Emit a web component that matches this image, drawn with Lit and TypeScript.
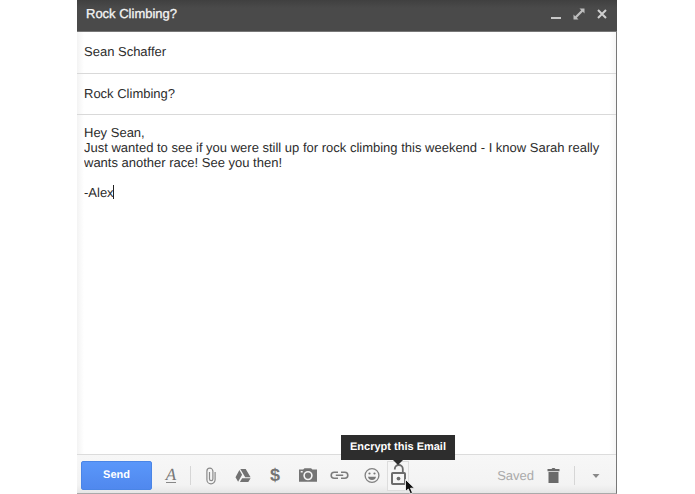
import { LitElement, html, css, svg } from "lit";
import { customElement } from "lit/decorators.js";

const icons = {
  clip: svg`<path d="M7.500 5v7a1.700 1.700 0 0 0 3.400 0V4.200a3 3 0 0 0-6 0V12.700a4.100 4.100 0 0 0 8.200 0V5" fill="none" stroke="#8a8a8a" stroke-width="1.200"/>`,
  drive: svg`<path d="M6.300 2h5.400l4.900 8.200h-5.400zM5.400 3.100l2.700 4.700-4 6.900L1.500 10.300zM8.100 11.200h8.500l-2.300 3.700H5.900z" fill="#727272"/>`,
  camera: svg`<path fill-rule="evenodd" d="M1 2.500h4.200L6.500 1.200h6.600l1.300 1.300H19v12.300H1zM10 3.900a4.700 4.700 0 1 0 0 9.400A4.700 4.700 0 0 0 10 3.900zM2.700 4v1.500h2V4zM10 5.500a3.100 3.100 0 1 1 0 6.200 3.100 3.100 0 0 1 0-6.200z" fill="#747474"/>`,
  link: svg`<path d="M8 5.200H4.200a3 3 0 0 0 0 6H8M11 5.200h3.800a3 3 0 0 1 0 6H11M5.800 8.200h7.400" fill="none" stroke="#7c7c7c" stroke-width="1.600"/>`,
  smile: svg`<circle cx="10" cy="8.500" r="6.900" fill="none" stroke="#808080" stroke-width="1.300"/><circle cx="7.500" cy="6.500" r="1.100" fill="#777"/><circle cx="12.500" cy="6.500" r="1.100" fill="#777"/><path d="M6 9.700h8a4.100 4.100 0 0 1-8 0z" fill="#777"/>`,
  trash: svg`<path d="M3.500 2h4l1-1h2l1 1h4v2.200h-12zM4.500 5h10v11h-10z" fill="#6a6a6a"/>`,
};

const icon = (shape: unknown) =>
  html`<svg width="18" height="18" viewBox="0 0 18 18" aria-hidden="true">${shape}</svg>`;

const MESSAGE = `Hey Sean,
Just wanted to see if you were still up for rock climbing this weekend - I know Sarah really wants another race! See you then!

-Alex`;

@customElement("app-root")
export class AppRoot extends LitElement {
  static styles = css`
    :host {
      display: block;
      box-sizing: border-box;
      min-height: 100vh;
      padding: 0 78px 0 77px;
      background: #fff;
      color: #2c2c2c;
      font: 13px/15px "Liberation Sans", Arial, sans-serif;
      text-rendering: geometricPrecision;
    }
    * { box-sizing: border-box; }
    button, input, textarea { font: inherit; color: inherit; text-rendering: inherit; border: 0; margin: 0; padding: 0; background: none; outline: 0; }
    button { display: flex; align-items: center; justify-content: center; cursor: default; }
    svg { display: block; overflow: visible; flex: none; }
    .window {
      display: flex;
      flex-direction: column;
      min-height: 100vh;
      border-right: 1px solid #777;
      border-bottom: 1px solid #aaa;
      background: linear-gradient(90deg, #f3f3f3, #fff 7px, #fff calc(100% - 7px), #f5f5f5);
    }
    header {
      display: flex;
      align-items: center;
      height: 32px;
      padding: 0 4px 4px 9px;
      margin-right: -1px;
      background: linear-gradient(#404040, #4a4a4a 8px);
      border-bottom: 1px solid #777;
      color: #f5f5f5;
    }
    h1 { flex: 1; margin: 0; font: inherit; -webkit-text-stroke: 0.3px #f5f5f5; }
    .control { width: 23px; height: 20px; }
    .field {
      height: 41px;
      padding: 0 7px 2px;
      border-bottom: 1px solid #d9d9d9;
    }
    .field.to { height: 42px; }
    .body { position: relative; flex: 1; display: flex; padding: 10px 7px; }
    textarea { flex: 1; min-width: 0; resize: none; overflow: hidden; }
    .cursor { position: absolute; left: 36px; top: 70px; width: 1px; height: 14px; background: #222; }
    .toolbar {
      display: flex;
      align-items: center;
      height: 39px;
      padding: 3px 4px 0;
      border-top: 1px solid #dcdcdc;
      background: linear-gradient(#f7f7f7, #f3f3f3 30px, #e6e6e6);
    }
    .send {
      width: 71px;
      height: 29px;
      margin-right: 3px;
      border: 1px solid #4a85e6;
      border-radius: 2px;
      background: linear-gradient(#5a97fa, #5088ee);
      color: #fff;
      font-size: 11px;
      font-weight: bold;
    }
    .tool { width: 32px; height: 28px; }
    .format { font: italic 17px/14px "Liberation Serif", serif; color: #777; }
    .format span { border-bottom: 1px solid #888; }
    .dollar { font-size: 18px; font-weight: bold; color: #747474; }
    .rule { width: 1px; height: 19px; margin: 0 4px 0 3px; background: #d6d6d6; }
    .encrypt { position: relative; display: flex; }
    .lock { width: 22px; height: 30px; border: 1px solid #ddd; background: #f6f6f6; }
    .tip {
      position: absolute;
      bottom: 31px;
      left: 50%;
      transform: translateX(-50%);
      padding: 5px 9px;
      background: #2d2d2d;
      color: #fff;
      font-size: 11px;
      font-weight: bold;
      white-space: nowrap;
    }
    .tip::after {
      content: "";
      position: absolute;
      top: 100%;
      left: 50%;
      margin-left: -5px;
      border: 5px solid transparent;
      border-top-color: #2d2d2d;
      border-bottom: 0;
    }
    .pointer { position: absolute; left: 18px; top: 18px; pointer-events: none; }
    .saved { margin-left: auto; color: #aaa; }
    .trash { margin-left: 3px; }
    .rule.end { margin: 0 5px; }
  `;

  render() {
    return html`
      <main class="window">
        <header>
          <h1>Rock Climbing?</h1>
          <button class="control" aria-label="Minimize">
            <svg width="12" height="12" viewBox="0 0 12 12"><path d="M1 10h10" stroke="#c8c8c8" stroke-width="2"/></svg>
          </button>
          <button class="control" aria-label="Full screen">
            <svg width="12" height="12" viewBox="0 0 12 12"><path d="M6.500 0.500H11.500v5L9.800 3.800 3.800 9.800l1.700 1.700H0.500v-5L2.200 8.200l6-6z" fill="#bdbdbd"/></svg>
          </button>
          <button class="control" aria-label="Close">
            <svg width="12" height="12" viewBox="0 0 12 12"><path d="M2 2l8 8M10 2l-8 8" stroke="#d0d0d0" stroke-width="2"/></svg>
          </button>
        </header>
        <input class="field to" aria-label="To" value="Sean Schaffer" />
        <input class="field" aria-label="Subject" value="Rock Climbing?" />
        <div class="body">
          <textarea aria-label="Message" .value=${MESSAGE}></textarea>
          <span class="cursor"></span>
        </div>
        <div class="toolbar" role="toolbar">
          <button class="send">Send</button>
          <button class="tool format" aria-label="Formatting options"><span>A</span></button>
          <span class="rule"></span>
          <button class="tool" aria-label="Attach files">${icon(icons.clip)}</button>
          <button class="tool" aria-label="Insert from Drive">${icon(icons.drive)}</button>
          <button class="tool dollar" aria-label="Send money">$</button>
          <button class="tool" aria-label="Insert photo">${icon(icons.camera)}</button>
          <button class="tool" aria-label="Insert link">${icon(icons.link)}</button>
          <button class="tool" aria-label="Insert emoji">${icon(icons.smile)}</button>
          <div class="encrypt">
            <button class="lock" aria-labelledby="tip">
              <svg width="16" height="24" viewBox="0 0 16 24">
                <rect x="2" y="9" width="13" height="11" rx="0.800" fill="none" stroke="#6c6c6c" stroke-width="2"/>
                <path d="M4.800 5.500V5a4 4 0 0 1 8 0v4" fill="none" stroke="#6c6c6c" stroke-width="1.800"/>
                <circle cx="8.500" cy="14.600" r="1.900" fill="#6c6c6c"/>
              </svg>
            </button>
            <span class="tip" id="tip" role="tooltip">Encrypt this Email</span>
            <svg class="pointer" width="10" height="15" viewBox="0 0 10 15" aria-hidden="true">
              <path d="M0.500 0.500v12l2.800-2.500 2 4.800 2.200-1-2-4.600h4z" fill="#111" stroke="#fff" stroke-width="0.800"/>
            </svg>
          </div>
          <span class="saved">Saved</span>
          <button class="tool trash" aria-label="Discard draft">${icon(icons.trash)}</button>
          <span class="rule end"></span>
          <button class="tool" aria-label="More options">
            <svg width="8" height="4" viewBox="0 0 8 4"><path d="M0.500 0h7L4 4z" fill="#888"/></svg>
          </button>
        </div>
      </main>
    `;
  }
}
